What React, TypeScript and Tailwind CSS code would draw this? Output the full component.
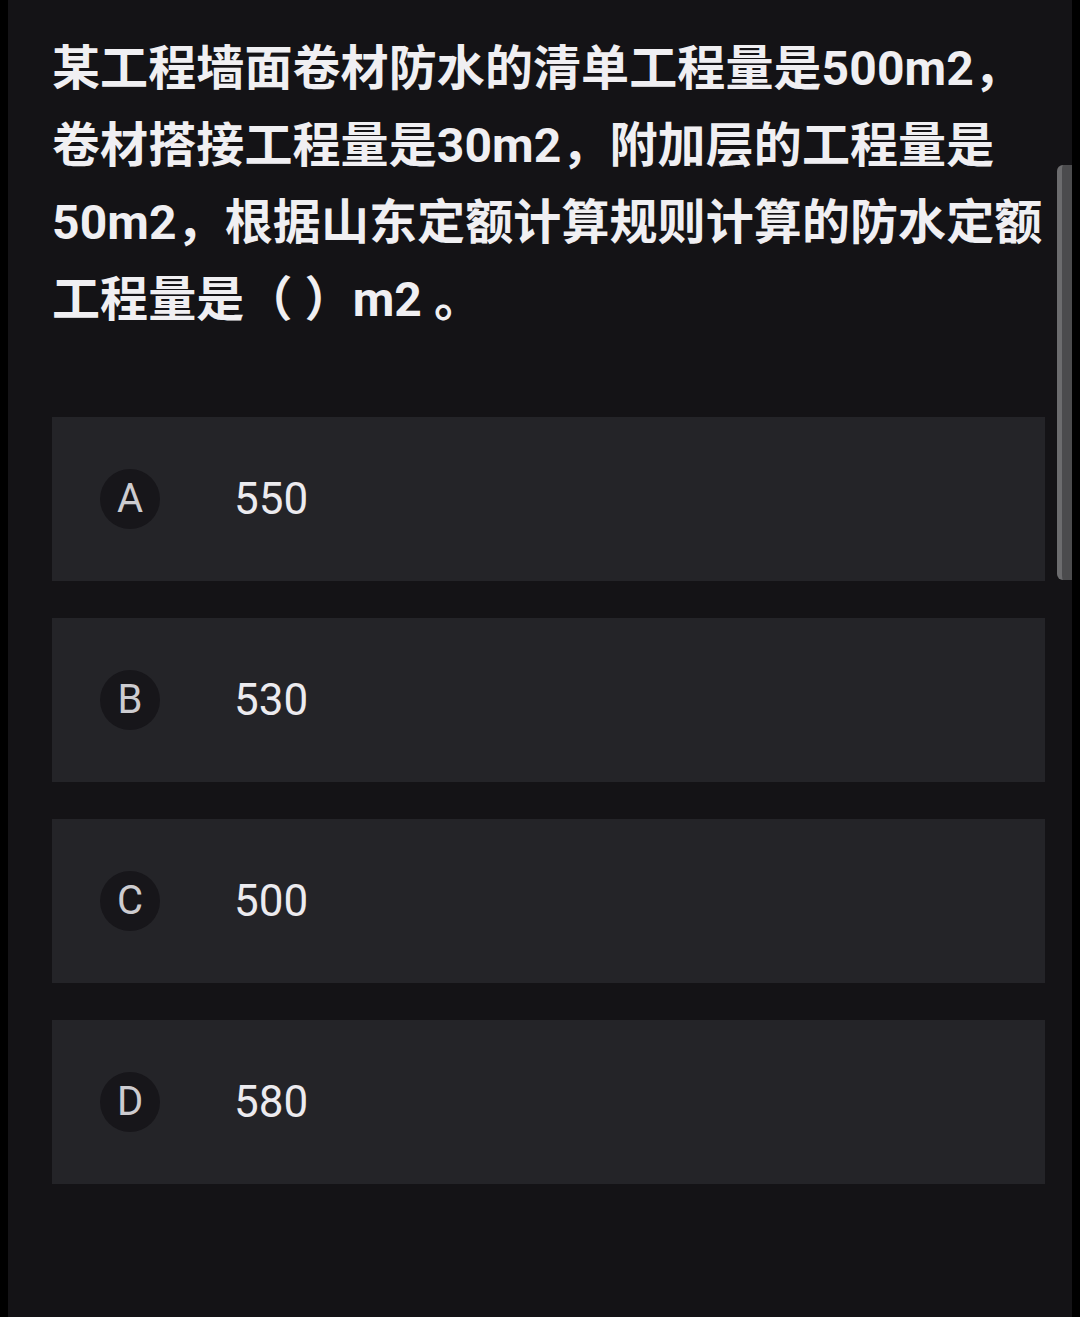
import React from 'react';

interface Option {
    key: string;
    text: string;
}

const options: Option[] = [
    { key: 'A', text: '550' },
    { key: 'B', text: '530' },
    { key: 'C', text: '500' },
    { key: 'D', text: '580' },
];

const font = { fontFamily: 'Roboto, "Noto Sans CJK SC", sans-serif' };

const App: React.FC = () => {
    return (
        <div className="relative w-[1080px] h-[1317px] bg-black overflow-hidden" style={font}>
            <div className="ml-[8px] mr-[8px] h-full bg-[#141316] pl-[44px] pr-[27px] pt-[30px]">
                <p className="text-[48px] leading-[77px] font-bold text-[#f0eff2] whitespace-nowrap tracking-[0.1px]">
                    某工程墙面卷材防水的清单工程量是500m2，
                    <br />
                    卷材搭接工程量是30m2，附加层的工程量是
                    <br />
                    50m2，根据山东定额计算规则计算的防水定额
                    <br />
                    工程量是（ ）m2 。
                </p>
                <div className="mt-[79px] flex flex-col gap-[37px]">
                    {options.map((item) => (
                        <div key={item.key} className="h-[164px] bg-[#242428] flex items-center pl-[48px]">
                            <div className="w-[60px] h-[60px] rounded-full bg-[#17161a] flex items-center justify-center text-[40px] text-[#cdccd0]">
                                {item.key}
                            </div>
                            <span className="ml-[74px] text-[44px] text-[#ecebef]">{item.text}</span>
                        </div>
                    ))}
                </div>
            </div>
            <div className="absolute left-[1057px] top-[165px] w-[15px] h-[415px] rounded-l-[6px] bg-[#4b4b4d] border-l-[5px] border-[#6c6c6e]"></div>
        </div>
    );
};

export default App;
